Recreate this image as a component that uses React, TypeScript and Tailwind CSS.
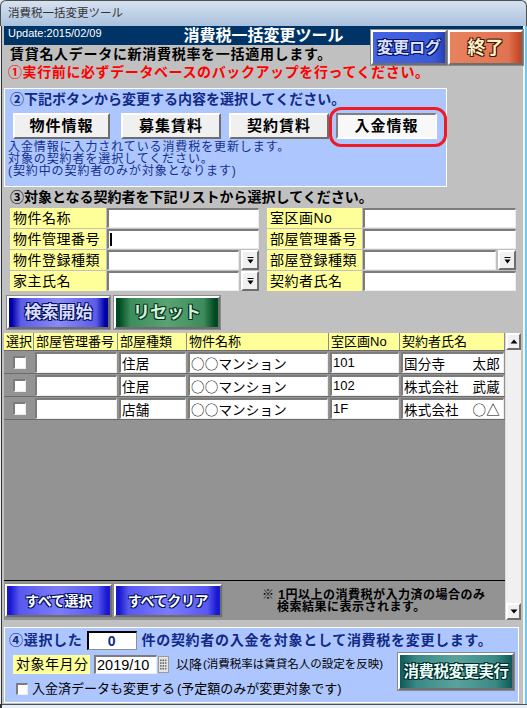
import React from 'react';

const F = "font-['Liberation_Sans','Noto_Sans_CJK_JP',sans-serif]";
const raised = 'border-2 border-t-white border-l-white border-b-[#6e6e6e] border-r-[#6e6e6e]';
const sunken =
  'border-t-2 border-l-2 border-t-[#7c7c7c] border-l-[#7c7c7c] border-b border-r border-b-[#ececec] border-r-[#ececec]';

function DropBtn() {
  return (
    <div className={`w-[18px] h-full shrink-0 bg-[#f0f0f0] ${raised} flex items-center justify-center`}>
      <svg width="9" height="9" viewBox="0 0 9 9">
        <rect x="1.5" y="1" width="6" height="1" fill="#000" />
        <path d="M1.5 3.5h6l-3 4z" fill="#000" />
      </svg>
    </div>
  );
}

function Field({ label, w, lw, drop, cursor }: { label: string; w: number; lw: number; drop?: boolean; cursor?: boolean }) {
  return (
    <div className="flex h-[20px]">
      <div style={{ width: lw }} className="bg-[#ffff99] text-[14px] leading-[20px] pl-[3px] tracking-[0.5px] whitespace-nowrap">
        {label}
      </div>
      <div style={{ width: w }} className="flex ml-[1px] gap-[2px]">
        <div className={`flex-1 bg-white ${sunken}`}>
          {cursor && <div className="ml-[1px] mt-[2px] w-[2px] h-[13px] bg-black" />}
        </div>
        {drop && <DropBtn />}
      </div>
    </div>
  );
}

const cols = [30, 84, 69, 142, 71, 105];
const heads = ['選択', '部屋管理番号', '部屋種類', '物件名称', '室区画No', '契約者氏名'];
const rows = [
  ['住居', '○○マンション', '101', '国分寺　　太郎'],
  ['住居', '○○マンション', '102', '株式会社　武蔵'],
  ['店舗', '○○マンション', '1F', '株式会社　○△'],
];

function Cell({ w, children, digits }: { w: number; children?: React.ReactNode; digits?: boolean }) {
  return (
    <div style={{ width: w }} className="px-[1px] shrink-0">
      <div
        className={`h-[21px] bg-white ${sunken} pl-[1px] whitespace-nowrap overflow-hidden ${
          digits
            ? 'text-[13px] leading-[18px]'
            : "font-['Noto_Sans_CJK_JP',sans-serif] text-[13.5px] leading-[18px] tracking-[0.2px]"
        }`}
      >
        {children}
      </div>
    </div>
  );
}

function Tri({ up }: { up?: boolean }) {
  return (
    <svg width="8" height="5" viewBox="0 0 8 5">
      <path d={up ? 'M0.5 4.5h7L4 0.5z' : 'M0.5 0.5h7L4 4.5z'} fill="#000" />
    </svg>
  );
}

export default function App() {
  return (
    <div className={`w-[527px] h-[708px] overflow-hidden bg-[#dfe7f1] ${F} text-black`}>
      {/* title bar */}
      <div className="h-[26px] rounded-t-[6px] border border-b-0 border-[#4e4e4e] bg-[linear-gradient(#d6e2f1,#aac1de)] pl-[7px] pt-[5px] text-[11.5px] leading-[14px] text-[#333]">
        消費税一括変更ツール
      </div>
      <div className="flex h-[678px]">
        <div className="w-[4px] flex">
          <div className="w-[1px] bg-[#e8eef6]" />
          <div className="w-[1px] bg-[#333]" />
          <div className="w-[2px] bg-[#c0c0c0]" />
        </div>

        {/* content */}
        <div className="w-[519px] relative flex flex-col bg-[#c0c0c0]">
          <div className="h-[19px] bg-[#003366] grid grid-cols-[1fr_auto_1fr] text-white">
            <div className="pl-[4px] pt-[1px] text-[11px] leading-[13px]">Update:2015/02/09</div>
            <div className="text-[16px] font-bold leading-[19px]">消費税一括変更ツール</div>
            <div />
          </div>

          <button
            className={`absolute left-[367px] top-[4px] w-[76px] h-[35px] ${raised} outline outline-1 outline-[#8a8a8a] bg-[linear-gradient(90deg,#4664e2_0%,#3a5ad8_85%,#2440b8_100%)] text-[16px] font-bold leading-[30px] text-[#dce0ff] [text-shadow:-1px_-1px_0_#001060,1px_-1px_0_#001060,-1px_1px_0_#001060,1px_1px_0_#001060]`}
          >
            変更ログ
          </button>
          <button
            className={`absolute left-[444px] top-[4px] w-[75px] h-[35px] ${raised} outline outline-1 outline-[#8a8a8a] bg-[linear-gradient(90deg,#e8825e_0%,#e07452_82%,#c4421e_100%)] text-[18px] font-bold leading-[30px] text-[#fff0c8] [text-shadow:-1px_-1px_0_#3c1400,1px_-1px_0_#3c1400,-1px_1px_0_#3c1400,1px_1px_0_#3c1400]`}
          >
            終了
          </button>

          <div className="h-[18px] pl-[6px] text-[14px] font-bold leading-[18px] tracking-[0.7px]">
            賃貸名人データに新消費税率を一括適用します。
          </div>
          <div className="h-[18px] pl-[4px] text-[14px] font-bold leading-[18px] tracking-[0.6px] text-[#ff0000]">
            ①実行前に必ずデータベースのバックアップを行ってください。
          </div>
          <div className="h-[7px]" />

          {/* section 2 */}
          <div className="relative h-[99px] w-[443px] border border-white bg-[#aec6fe] flex flex-col">
            <div className="h-[20px] pl-[5px] text-[14px] font-bold leading-[20px] text-[#102a86]">
              ②下記ボタンから変更する内容を選択してください。
            </div>
            <div className="mt-[4px] h-[26px] flex text-[15px] font-bold tracking-[1px] leading-[22px]">
              <button className={`ml-[8px] w-[97px] bg-[#f0f0f0] ${raised}`}>物件情報</button>
              <button className={`ml-[11px] w-[100px] bg-[#f0f0f0] ${raised}`}>募集賃料</button>
              <button className={`ml-[8px] w-[100px] bg-[#f0f0f0] ${raised}`}>契約賃料</button>
              <button className="ml-[7px] w-[101px] bg-[#f8f8f8] border-2 border-t-[#808080] border-l-[#808080] border-b-white border-r-white">
                入金情報
              </button>
            </div>
            <div className="mt-[2px] pl-[3px] text-[12px] leading-[12px] tracking-[0.9px] text-[#12308c]">
              <div>入金情報に入力されている消費税を更新します。</div>
              <div>対象の契約者を選択してください。</div>
              <div>(契約中の契約者のみが対象となります)</div>
            </div>
            <div className="absolute left-[324px] top-[18px] w-[118px] h-[40px] rounded-[12px] border-[3px] border-[#ee1c24]" />
          </div>

          {/* section 3 */}
          <div className="h-[21px] pl-[6px] text-[14px] font-bold leading-[21px]">
            ③対象となる契約者を下記リストから選択してください。
          </div>
          <div className="h-[83px] flex pl-[6px]">
            <div className="flex flex-col gap-[1px]">
              <Field label="物件名称" lw={96} w={152} />
              <Field label="物件管理番号" lw={96} w={152} cursor />
              <Field label="物件登録種類" lw={96} w={152} drop />
              <Field label="家主氏名" lw={96} w={152} drop />
            </div>
            <div className="ml-[8px] flex flex-col gap-[1px]">
              <Field label="室区画No" lw={95} w={153} />
              <Field label="部屋管理番号" lw={95} w={153} />
              <Field label="部屋登録種類" lw={95} w={153} drop />
              <Field label="契約者氏名" lw={95} w={153} />
            </div>
          </div>

          <div className="mt-[5px] h-[33px] flex text-[17px] font-bold leading-[28px]">
            <button
              className={`ml-[3px] w-[103px] ${raised} outline outline-1 outline-[#8a8a8a] bg-[linear-gradient(90deg,#0000a8_0%,#0000a8_3%,#5c5ce8_12%,#8a8af8_50%,#5c5ce8_88%,#0000a8_97%,#0000a8_100%)] text-[#dcdcff] [text-shadow:-1px_-1px_0_#00105a,1px_-1px_0_#00105a,-1px_1px_0_#00105a,1px_1px_0_#00105a]`}
            >
              検索開始
            </button>
            <button
              className={`ml-[4px] w-[106px] ${raised} outline outline-1 outline-[#8a8a8a] bg-[linear-gradient(90deg,#004a20_0%,#004a20_3%,#3c8c5c_14%,#5aa274_50%,#3c8c5c_86%,#004a20_97%,#004a20_100%)] text-[#d4eed8] [text-shadow:-1px_-1px_0_#00301a,1px_-1px_0_#00301a,-1px_1px_0_#00301a,1px_1px_0_#00301a]`}
            >
              リセット
            </button>
          </div>

          {/* grid */}
          <div className="mt-[4px] h-[287px] flex">
            <div className="w-[501px] flex flex-col bg-[#939393]">
              <div className="h-[18px] flex border-b border-[#6c6c6c] bg-[#ffff99]">
                {heads.map((h, i) => (
                  <div
                    key={h}
                    style={{ width: cols[i] }}
                    className="shrink-0 border-r border-[#8c8c8c] pl-[2px] text-[13px] leading-[17px] whitespace-nowrap overflow-hidden"
                  >
                    {h}
                  </div>
                ))}
              </div>
              {rows.map((r, i) => (
                <div key={i} className="h-[23px] flex items-start pt-[1px] border-b border-[#6c6c6c]">
                  <div style={{ width: cols[0] }} className="shrink-0 flex justify-center pt-[4px]">
                    <div className={`w-[13px] h-[13px] bg-white ${sunken}`} />
                  </div>
                  <Cell w={cols[1]} />
                  <Cell w={cols[2]}>{r[0]}</Cell>
                  <Cell w={cols[3]}>{r[1]}</Cell>
                  <Cell w={cols[4]} digits>
                    {r[2]}
                  </Cell>
                  <Cell w={cols[5]}>{r[3]}</Cell>
                </div>
              ))}
              <div className="h-[160px]" />
              <div className="h-[1px] bg-black" />
              <div className="h-[39px] flex items-start pt-[3px]">
                <button
                  className={`ml-[1px] w-[107px] h-[33px] ${raised} outline outline-1 outline-[#8a8a8a] bg-[linear-gradient(90deg,#1818d0_0%,#1818d0_3%,#5858f0_12%,#7c7cfa_50%,#5858f0_88%,#1818d0_97%,#1818d0_100%)] text-[14px] font-bold leading-[28px] tracking-[-0.3px] text-white [text-shadow:-1px_-1px_0_#00105a,1px_-1px_0_#00105a,-1px_1px_0_#00105a,1px_1px_0_#00105a]`}
                >
                  すべて選択
                </button>
                <button
                  className={`ml-[2px] w-[108px] h-[33px] ${raised} outline outline-1 outline-[#8a8a8a] bg-[linear-gradient(90deg,#1818d0_0%,#1818d0_3%,#5858f0_12%,#7c7cfa_50%,#5858f0_88%,#1818d0_97%,#1818d0_100%)] text-[14px] font-bold leading-[28px] tracking-[-0.3px] text-white [text-shadow:-1px_-1px_0_#00105a,1px_-1px_0_#00105a,-1px_1px_0_#00105a,1px_1px_0_#00105a]`}
                >
                  すべてクリア
                </button>
                <div className="ml-[40px] mt-[5px] text-[12px] font-bold leading-[12px] tracking-[0.5px] whitespace-nowrap">
                  <div>※ 1円以上の消費税が入力済の場合のみ</div>
                  <div className="pl-[15px]">検索結果に表示されます。</div>
                </div>
              </div>
            </div>
            <div className="w-[16px] flex flex-col bg-[#f0f0f0] border-l border-[#dcdcdc]">
              <div className={`h-[17px] bg-[#f0f0f0] ${raised} flex items-center justify-center`}>
                <Tri up />
              </div>
              <div className="flex-1" />
              <div className={`h-[17px] bg-[#f0f0f0] ${raised} flex items-center justify-center`}>
                <Tri />
              </div>
            </div>
          </div>

          <div className="h-[7px]" />

          {/* section 4 */}
          <div className="h-[76px] w-[515px] border border-white bg-[#aec6fe] flex flex-col">
            <div className="mt-[3px] h-[19px] flex items-center pl-[4px] text-[14px] font-bold tracking-[0.7px] text-[#102a86] whitespace-nowrap">
              <span>④選択した</span>
              <div className="ml-[4px] w-[50px] h-[19px] bg-white border-t-2 border-l-2 border-black border-b border-r border-b-[#909090] border-r-[#909090] text-center text-[14px] leading-[16px]">
                0
              </div>
              <span className="ml-[5px]">件の契約者の入金を対象として消費税を変更します。</span>
            </div>
            <div className="flex">
              <div className="flex flex-col">
                <div className="mt-[5px] h-[19px] flex items-center pl-[8px] whitespace-nowrap">
                  <div className="w-[77px] h-[19px] bg-[#ffff99] pl-[3px] text-[14px] leading-[19px] tracking-[0.5px]">
                    対象年月分
                  </div>
                  <div className={`ml-[4px] w-[63px] h-[19px] bg-white ${sunken} text-[14.5px] leading-[16px] pl-[1px]`}>
                    2019/10
                  </div>
                  <div className="ml-[1px] w-[11px] h-[17px] bg-[#e4e4e4] border border-[#9a9a9a] flex items-center justify-center">
                    <svg width="7" height="11" viewBox="0 0 7 11">
                      {[0, 1, 2, 3].map((ry) =>
                        [0, 1, 2].map((cx) => (
                          <rect key={`${ry}-${cx}`} x={cx * 2.4} y={ry * 2.8 + 0.5} width="1.6" height="1.6" fill="#6a6a6a" />
                        ))
                      )}
                    </svg>
                  </div>
                  <span className="ml-[7px] text-[13px] leading-[19px]">以降</span>
                  <span className="ml-[1px] text-[11.5px] leading-[19px]">(消費税率は賃貸名人の設定を反映)</span>
                </div>
                <div className="mt-[7px] h-[16px] flex items-center pl-[11px] whitespace-nowrap">
                  <div className={`w-[12px] h-[12px] bg-white ${sunken}`} />
                  <span className="ml-[4px] text-[13px] leading-[16px]">入金済データも変更する</span>
                  <span className="ml-[2px] text-[13px] leading-[16px]">(予定額のみが変更対象です)</span>
                </div>
              </div>
              <button
                className={`ml-auto mr-[4px] mt-[3px] w-[116px] h-[37px] ${raised} outline outline-1 outline-[#8a8a8a] bg-[linear-gradient(90deg,#0e5a5a_0%,#3a8a86_15%,#5aa29c_50%,#3a8a86_85%,#0e5a5a_100%)] text-[15.5px] font-bold leading-[32px] tracking-[-0.5px] text-[#eafff8] [text-shadow:-1px_-1px_0_#002828,1px_-1px_0_#002828,-1px_1px_0_#002828,1px_1px_0_#002828]`}
              >
                消費税変更実行
              </button>
            </div>
          </div>
          <div className="flex-1" />
        </div>

        <div className="w-[4px] flex">
          <div className="w-[2px] bg-[#f4f4f4]" />
          <div className="w-[2px] bg-[#74c4ee]" />
        </div>
      </div>
      <div className="h-[4px] flex">
        <div className="w-[2px] bg-[#333]" />
        <div className="flex-1 border-t border-[#505050] bg-[#e8eef6]" />
      </div>
    </div>
  );
}
